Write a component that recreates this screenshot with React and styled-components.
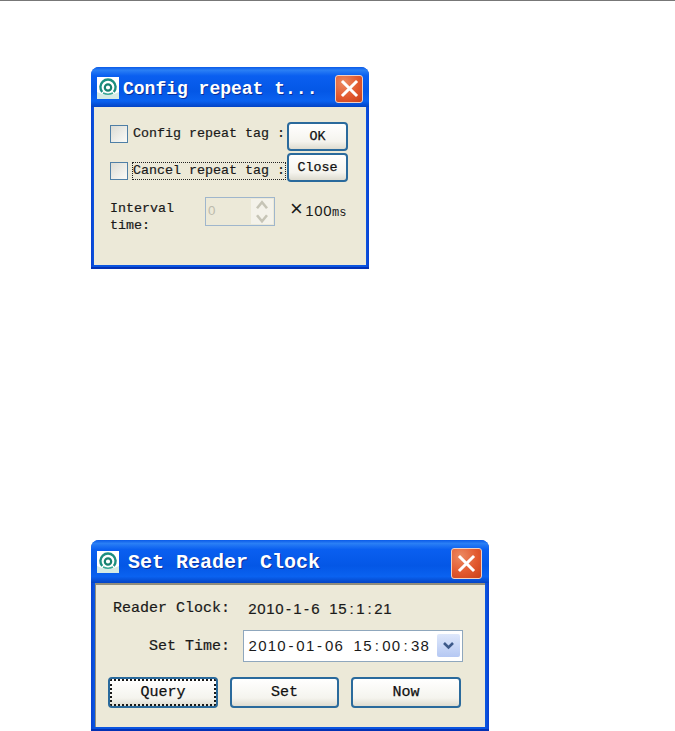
import React from "react";
import styled, { createGlobalStyle } from "styled-components";

const Global = createGlobalStyle`
  html, body { margin: 0; padding: 0; background: #fff; height: 731px; overflow: hidden; }
  #root { height: 731px; }
`;

const Page = styled.div`
  display: flex;
  flex-direction: column;
  align-items: flex-start;
  padding-left: 91px;
  height: 731px;
  overflow: hidden;
  box-sizing: border-box;
  border-top: 1px solid #777;
  font-family: "Liberation Mono", monospace;
  color: #1a1a1a;
`;

const Window = styled.section`
  flex: none;
  box-sizing: border-box;
  width: ${p => p.$w}px;
  height: ${p => p.$h}px;
  margin-top: ${p => p.$top}px;
  padding: 0 ${p => p.$side}px ${p => p.$bottom}px;
  display: flex;
  flex-direction: column;
  border-radius: 8px 8px 0 0;
  background: linear-gradient(90deg, #0a3fd0 0, #0a55e0 3px, #0a55e0 calc(100% - 3px), #0a3fd0 100%);
  box-shadow: inset 0 -2px 0 #0331b4;
`;

const TitleBar = styled.header`
  flex: none;
  height: ${p => p.$h}px;
  margin: 0 -${p => p.$side}px;
  padding: 3px ${p => p.$right}px 0 6px;
  box-sizing: border-box;
  display: flex;
  align-items: center;
  border-radius: 8px 8px 0 0;
  background: linear-gradient(180deg, #0a5ae8 0%, #2a7ff5 8%, #0a5ff0 22%, #0457e6 60%, #0a62f0 85%, #0343c4 100%);
`;

const AppIcon = styled.svg`
  flex: none;
  width: 22px;
  height: 22px;
  margin-top: -2px;
`;

const Title = styled.h1`
  margin: 0 0 0 ${p => p.$gap}px;
  flex: 1;
  font: bold ${p => p.$size}px/1 "Liberation Mono", monospace;
  color: #fff;
  white-space: pre;
  text-shadow: 1px 1px 0 #0a2f9a;
`;

const CloseButton = styled.button`
  flex: none;
  width: ${p => p.$size}px;
  height: ${p => p.$size}px;
  padding: 0;
  box-sizing: border-box;
  border: 1.5px solid #f2cfc0;
  border-radius: 3px;
  background: radial-gradient(circle at 30% 25%, #ec8a62 0, #e2592f 55%, #c9401a 100%);
  display: flex;
  align-items: center;
  justify-content: center;
`;

const Body = styled.div`
  flex: 1;
  min-height: 0;
  background: #ece9d8;
  font-size: ${p => p.$size}px;
  display: flex;
  flex-direction: column;
  box-sizing: border-box;
`;

const ConfigBody = styled(Body)`
  padding: 15px 18px 0 16px;
`;

const ClockBody = styled(Body)`
  border-top: 2px solid #918d7c;
  border-left: 1px solid #918d7c;
  padding: 14px 22px 0 12px;
`;

const TopArea = styled.div`
  display: flex;
  justify-content: space-between;
`;

const CheckColumn = styled.div`
  display: flex;
  flex-direction: column;
  gap: 19px;
  padding-top: 3px;
`;

const CheckRow = styled.label`
  display: flex;
  align-items: center;
  gap: 5px;
  height: 18px;
`;

const Box = styled.span`
  flex: none;
  width: 18px;
  height: 18px;
  box-sizing: border-box;
  border: 1.5px solid #4f7fa6;
  background: linear-gradient(135deg, #dcdcd4, #fbfbf8);
`;

const CheckText = styled.span`
  white-space: pre;
  line-height: 16px;
  -webkit-text-stroke: 0.2px #1a1a1a;
  outline: ${p => (p.$focus ? "1px dotted #222" : "none")};
`;

const ButtonColumn = styled.div`
  display: flex;
  flex-direction: column;
  gap: 2px;
`;

const PushButton = styled.button`
  box-sizing: border-box;
  flex: none;
  width: ${p => p.$w}px;
  height: ${p => p.$h}px;
  padding: 0;
  border: 2px solid #2a6a9c;
  border-radius: 4px;
  background: linear-gradient(180deg, #fff 0%, #f5f4ee 70%, #dedcd0 100%);
  font: inherit;
  color: #111;
  -webkit-text-stroke: 0.25px #111;
  outline: ${p => (p.$focus ? "2px dotted #1a1a1a" : "none")};
  outline-offset: -4px;
`;

const IntervalRow = styled.div`
  display: flex;
  align-items: flex-start;
  margin-top: 15px;
`;

const IntervalLabel = styled.div`
  width: 95px;
  margin-top: 3px;
  line-height: 17px;
  -webkit-text-stroke: 0.2px #1a1a1a;
`;

const Spinner = styled.div`
  width: 70px;
  height: 29px;
  box-sizing: border-box;
  border: 1.5px solid #9fb6cc;
  display: flex;
  justify-content: space-between;
  color: #bdbbad;
  padding: 1px 1px 1px 2px;
  line-height: 23px;
  font-family: "Liberation Sans", sans-serif;
`;

const SpinArrows = styled.div`
  width: 22px;
  display: flex;
  flex-direction: column;
  background: #f4f2ea;
`;

const SpinArrow = styled.svg`
  flex: 1;
  width: 22px;
  min-height: 0;
`;

const UnitText = styled.span`
  display: flex;
  align-items: baseline;
  margin: 3px 0 0 15px;
  line-height: 17px;
  font-size: 12px;
  white-space: pre;
`;

const Times = styled.span`
  font-family: "Liberation Sans", sans-serif;
  font-size: 22px;
  line-height: 17px;
  width: 15px;
`;

const Figures = styled.span`
  display: inline-flex;
  font-family: "Liberation Sans", sans-serif;
  font-size: 15px;
`;

const Cell = styled.span`
  display: block;
  width: ${p => p.$cell}px;
  text-align: center;
`;

const ClockRow = styled.div`
  display: flex;
  align-items: center;
  padding-left: 5px;
  height: 18px;
  white-space: pre;
  -webkit-text-stroke: 0.2px #1a1a1a;
`;

const SetRow = styled.div`
  display: flex;
  align-items: center;
  margin-top: 13px;
  height: 32px;
`;

const SetLabel = styled.span`
  width: 122px;
  text-align: right;
  white-space: pre;
  -webkit-text-stroke: 0.2px #1a1a1a;
`;

const DateBox = styled.div`
  margin-left: 13px;
  width: 220px;
  height: 32px;
  box-sizing: border-box;
  background: #fff;
  border: 1.5px solid #8fa7bd;
  display: flex;
  align-items: center;
  justify-content: space-between;
  padding: 0 2px 1px 4px;
`;

const DropArrow = styled.span`
  width: 23px;
  height: 23px;
  border-radius: 2px;
  background: linear-gradient(180deg, #dfe8fb, #b5c8f3);
  display: flex;
  align-items: center;
  justify-content: center;
`;

const ButtonRow = styled.div`
  display: flex;
  gap: 12px;
  margin-top: 15px;
`;

const Fixed = ({ text, cell }) => (
  <Figures>
    {[...text].map((c, i) => (
      <Cell key={i} $cell={cell}>{c === " " ? "\u00a0" : c}</Cell>
    ))}
  </Figures>
);

const AppLogo = () => (
  <AppIcon viewBox="0 0 22 22">
    <rect width="22" height="22" fill="#fff" />
    <path d="M0 15 Q11 21 22 15 L22 22 L0 22 Z" fill="#d4ebe4" />
    <path d="M5.2 15 A7.6 7.6 0 1 1 16.8 15" fill="none" stroke="#1c8f80" strokeWidth="2.4" />
    <circle cx="11" cy="10.5" r="3.2" fill="none" stroke="#17806f" strokeWidth="2.2" />
    <path d="M6 16 Q11 18.5 16 16" fill="none" stroke="#3aa896" strokeWidth="1.6" />
  </AppIcon>
);

const CloseX = () => (
  <svg width="19" height="19" viewBox="0 0 19 19">
    <path d="M3 3 L16 16 M16 3 L3 16" stroke="#fff" strokeWidth="3" strokeLinecap="square" />
  </svg>
);

const Arrow = ({ up }) => (
  <SpinArrow viewBox="0 0 22 12">
    <path d={up ? "M6 9 L11 3 L16 9" : "M6 3 L11 9 L16 3"} fill="none" stroke="#c6c4b6" strokeWidth="2.6" />
  </SpinArrow>
);

export default function App() {
  return (
    <Page>
      <Global />
      <Window $w={278} $h={202} $top={66} $side={3} $bottom={4}>
        <TitleBar $h={40} $side={3} $right={6}>
          <AppLogo />
          <Title $size={18} $gap={4}>Config repeat t...</Title>
          <CloseButton $size={28} aria-label="Close"><CloseX /></CloseButton>
        </TitleBar>
        <ConfigBody $size={13.33}>
          <TopArea>
            <CheckColumn>
              <CheckRow>
                <Box />
                <CheckText>Config repeat tag :</CheckText>
              </CheckRow>
              <CheckRow>
                <Box />
                <CheckText $focus>Cancel repeat tag :</CheckText>
              </CheckRow>
            </CheckColumn>
            <ButtonColumn>
              <PushButton $w={61} $h={29}>OK</PushButton>
              <PushButton $w={61} $h={29}>Close</PushButton>
            </ButtonColumn>
          </TopArea>
          <IntervalRow>
            <IntervalLabel>Interval<br />time:</IntervalLabel>
            <Spinner>
              <span>0</span>
              <SpinArrows>
                <Arrow up />
                <Arrow />
              </SpinArrows>
            </Spinner>
            <UnitText><Times>×</Times><Fixed text="100" cell={9} />ms</UnitText>
          </IntervalRow>
        </ConfigBody>
      </Window>

      <Window $w={398} $h={191} $top={271} $side={4} $bottom={4}>
        <TitleBar $h={43} $side={4} $right={7}>
          <AppLogo />
          <Title $size={20} $gap={9}>Set Reader Clock</Title>
          <CloseButton $size={31} aria-label="Close"><CloseX /></CloseButton>
        </TitleBar>
        <ClockBody $size={15}>
          <ClockRow>Reader Clock:  <Fixed text="2010-1-6 15:1:21" cell={9} /></ClockRow>
          <SetRow>
            <SetLabel>Set Time:</SetLabel>
            <DateBox>
              <Fixed text="2010-01-06 15:00:38" cell={9.55} />
              <DropArrow>
                <svg width="13" height="9" viewBox="0 0 13 9">
                  <path d="M2 2 L6.5 6.5 L11 2" fill="none" stroke="#3d5a8a" strokeWidth="2.6" />
                </svg>
              </DropArrow>
            </DateBox>
          </SetRow>
          <ButtonRow>
            <PushButton $w={110} $h={31} $focus>Query</PushButton>
            <PushButton $w={109} $h={31}>Set</PushButton>
            <PushButton $w={110} $h={31}>Now</PushButton>
          </ButtonRow>
        </ClockBody>
      </Window>
    </Page>
  );
}
